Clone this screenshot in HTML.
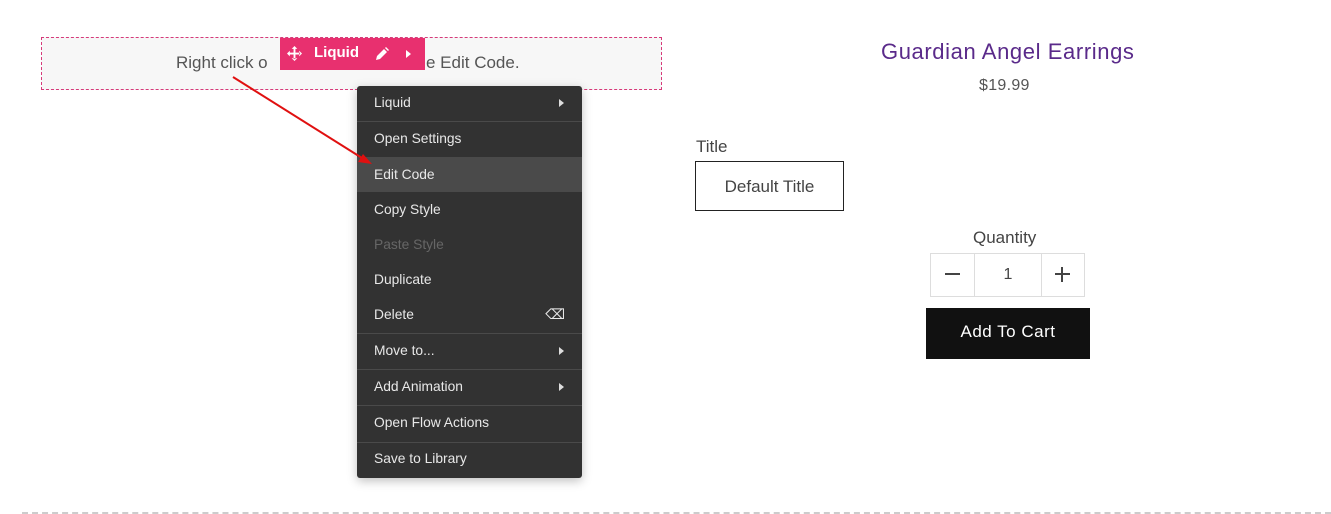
<!DOCTYPE html><html><head><style>
body{margin:0;width:1331px;height:514px;background:#fff;position:relative;overflow:hidden;font-family:"Liberation Sans",sans-serif}
.a{position:absolute}
.box{left:41px;top:37px;width:619px;height:51px;background:#f7f7f7;border:1px dashed #d63a7a}
.menu{left:357px;top:86px;width:225px;height:392px;background:#323232;border-radius:3px;box-shadow:0 3px 10px rgba(0,0,0,.25)}
.it{position:absolute;left:0;width:225px;color:#e8e8e8;font-size:13.8px;padding-left:17px;box-sizing:border-box;line-height:35px}
.sep{position:absolute;left:0;width:225px;height:1px;background:#4a4a4a}
.tri{position:absolute;right:18px;top:14px;border-left:5px solid #ddd;border-top:4px solid transparent;border-bottom:4px solid transparent}
</style></head><body>
<div class="a box"></div>
<div class="a" style="left:176px;top:53px;font-size:17px;color:#555">Right click o</div>
<div class="a" style="left:426px;top:53px;font-size:17px;color:#555;white-space:nowrap">e Edit Code.</div>
<div class="a" style="left:280px;top:38px;width:145px;height:32px;background:#e8306f;color:#fff;font-weight:bold;font-size:15px">
<svg class="a" style="left:7px;top:8px" width="15" height="15" viewBox="0 0 16 16" fill="#fff"><path d="M7 2h2v12H7zM2 7h12v2H2zM8 0l3 3H5zM8 16l3-3H5zM0 8l3-3v6zM16 8l-3-3v6z"/></svg>
<span class="a" style="left:34px;top:6px">Liquid</span>
<svg class="a" style="left:95px;top:9px" width="14" height="14" viewBox="0 0 14 14" fill="#fff"><path d="M1 13l1-4 7-7 3 3-7 7zM10 1l1-1 3 3-1 1z"/></svg>
<div class="a" style="left:126px;top:12px;border-left:5px solid #fff;border-top:4px solid transparent;border-bottom:4px solid transparent"></div>
</div>
<div class="a menu">
<div class="it" style="top:-1px">Liquid<div class="tri"></div></div>
<div class="sep" style="top:35px"></div>
<div class="it" style="top:35px">Open Settings</div>
<div class="it" style="top:71px;background:#4a4a4a">Edit Code</div>
<div class="it" style="top:106px">Copy Style</div>
<div class="it" style="top:141px;color:#666">Paste Style</div>
<div class="it" style="top:176px">Duplicate</div>
<div class="it" style="top:211px">Delete<span style="position:absolute;right:17px;font-size:14px">⌫</span></div>
<div class="sep" style="top:247px"></div>
<div class="it" style="top:247px">Move to...<div class="tri"></div></div>
<div class="sep" style="top:283px"></div>
<div class="it" style="top:283px">Add Animation<div class="tri"></div></div>
<div class="sep" style="top:319px"></div>
<div class="it" style="top:319px">Open Flow Actions</div>
<div class="sep" style="top:356px"></div>
<div class="it" style="top:355px">Save to Library</div>
</div>
<svg class="a" style="left:0;top:0;z-index:5" width="700" height="200"><line x1="233" y1="77" x2="362" y2="158" stroke="#e01010" stroke-width="2"/><path d="M372 164l-14-2 5-8z" fill="#e01010"/></svg>
<div class="a" style="left:881px;top:39px;font-size:22px;letter-spacing:.6px;color:#5a2a8a">Guardian Angel Earrings</div>
<div class="a" style="left:979px;top:77px;font-size:16px;color:#555;letter-spacing:.3px">$19.99</div>
<div class="a" style="left:696px;top:137px;font-size:17px;color:#444">Title</div>
<div class="a" style="left:695px;top:161px;width:147px;height:48px;border:1px solid #222;font-size:17px;color:#444;text-align:center;line-height:50px">Default Title</div>
<div class="a" style="left:973px;top:228px;font-size:17px;color:#444">Quantity</div>
<div class="a" style="left:930px;top:253px;width:153px;height:42px;border:1px solid #ddd"></div>
<div class="a" style="left:974px;top:253px;width:66px;height:44px;border-left:1px solid #ddd;border-right:1px solid #ddd;text-align:center;line-height:44px;font-size:16px;color:#444">1</div>
<div class="a" style="left:945px;top:273px;width:15px;height:2px;background:#444"></div>
<div class="a" style="left:1055px;top:273px;width:15px;height:2px;background:#444"></div>
<div class="a" style="left:1061px;top:267px;width:2px;height:15px;background:#444"></div>
<div class="a" style="left:926px;top:308px;width:164px;height:51px;background:#111;color:#fff;font-size:17px;text-align:center;line-height:48px;letter-spacing:.5px">Add To Cart</div>
<div class="a" style="left:22px;top:512px;width:1309px;border-top:2px dashed #ccc"></div>
</body></html>
